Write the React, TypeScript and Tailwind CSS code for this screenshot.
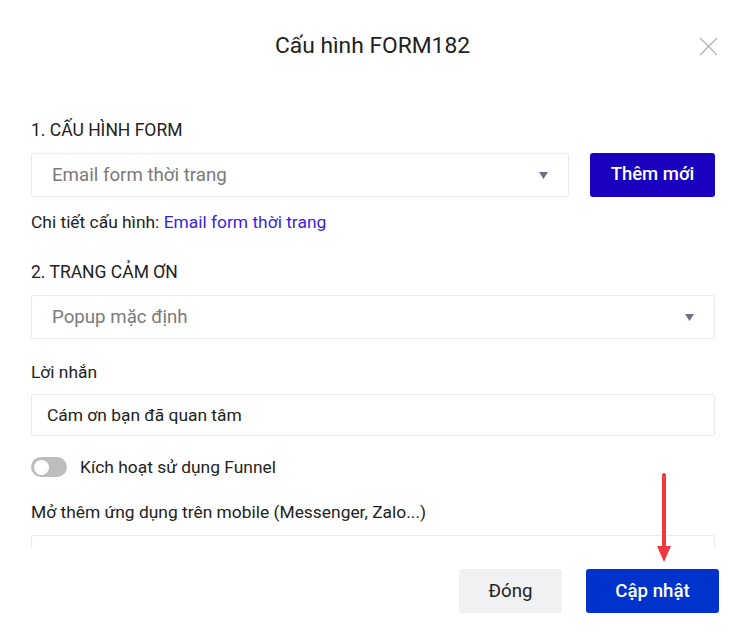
const font = { fontFamily: "Roboto, 'Noto Sans', sans-serif" };

const SelectBox = ({ value }: { value: string }) => (
  <div className="flex h-[44px] flex-1 items-center justify-between rounded-[2px] border border-[#ebebeb] bg-white pl-[20px] pr-[20px]">
    <span className="text-[18.7px] text-[#7a7a7a]">{value}</span>
    <svg width="9" height="7" viewBox="0 0 9 7">
      <path d="M0 0 L9 0 L4.5 7 Z" fill="#6b7180" />
    </svg>
  </div>
);

export default function App() {
  return (
    <div className="relative flex h-[640px] w-[745px] flex-col overflow-hidden bg-white text-[#222]" style={font}>
      {/* header */}
      <div className="relative flex h-[88px] shrink-0 items-center justify-center pt-[3px]">
        <h2 className="text-[22.8px] leading-[30px] text-[#222]">Cấu hình FORM182</h2>
        <button className="absolute right-[27px] top-[37px] h-[19px] w-[19px]">
          <svg width="19" height="19" viewBox="0 0 19 19">
            <path d="M1 1 L18 18 M18 1 L1 18" stroke="#b3b3b3" strokeWidth="1.3" />
          </svg>
        </button>
      </div>

      {/* body */}
      <div className="flex h-[460px] shrink-0 flex-col overflow-hidden pl-[31px] pr-[30px] pt-[30px]">
        <p className="text-[17.5px] leading-[24px]">1. CẤU HÌNH FORM</p>
        <div className="mt-[11px] flex shrink-0 gap-[21px]">
          <SelectBox value="Email form thời trang" />
          <button className="h-[44px] w-[125px] rounded-[3px] bg-[#1a00bf] text-[18.5px] font-medium text-white">
            Thêm mới
          </button>
        </div>
        <p className="mt-[13px] text-[17.4px] leading-[24px]">
          Chi tiết cấu hình: <span className="text-[#3a1fe0]">Email form thời trang</span>
        </p>

        <p className="mt-[26px] text-[17.5px] leading-[24px]">2. TRANG CẢM ƠN</p>
        <div className="mt-[11px] flex shrink-0">
          <SelectBox value="Popup mặc định" />
        </div>

        <p className="mt-[21px] text-[17.4px] leading-[24px]">Lời nhắn</p>
        <div className="mt-[10px] flex h-[42px] shrink-0 items-center rounded-[2px] border border-[#ebebeb] px-[15px] text-[17.4px]">
          Cám ơn bạn đã quan tâm
        </div>

        <div className="mt-[19px] flex h-[24px] shrink-0 items-center gap-[13px]">
          <div className="flex h-[20px] w-[36px] items-center rounded-full bg-[#bdbdbd] pl-[3px]">
            <div className="h-[15px] w-[15px] rounded-full bg-white" />
          </div>
          <span className="text-[17.4px]">Kích hoạt sử dụng Funnel</span>
        </div>

        <p className="mt-[21px] text-[17.4px] leading-[24px]">Mở thêm ứng dụng trên mobile (Messenger, Zalo...)</p>
        <div className="mt-[11px] h-[42px] shrink-0 rounded-[2px] border border-[#ebebeb]" />
      </div>

      {/* footer */}
      <div className="flex justify-end gap-[24px] bg-white pr-[26px] pt-[21px]">
        <button className="h-[44px] w-[103px] rounded-[3px] bg-[#f0f1f3] text-[18.7px] text-[#222]">Đóng</button>
        <button className="h-[44px] w-[133px] rounded-[3px] bg-[#0033cc] text-[18.7px] font-medium text-white">
          Cập nhật
        </button>
      </div>

      {/* annotation arrow */}
      <svg className="pointer-events-none absolute left-[654px] top-[472px]" width="20" height="92" viewBox="0 0 20 92">
        <path d="M10 3 L10 76" stroke="#f2383f" strokeWidth="4" strokeLinecap="round" />
        <path d="M3 74 L17 74 L10 90 Z" fill="#f2383f" />
      </svg>
    </div>
  );
}
